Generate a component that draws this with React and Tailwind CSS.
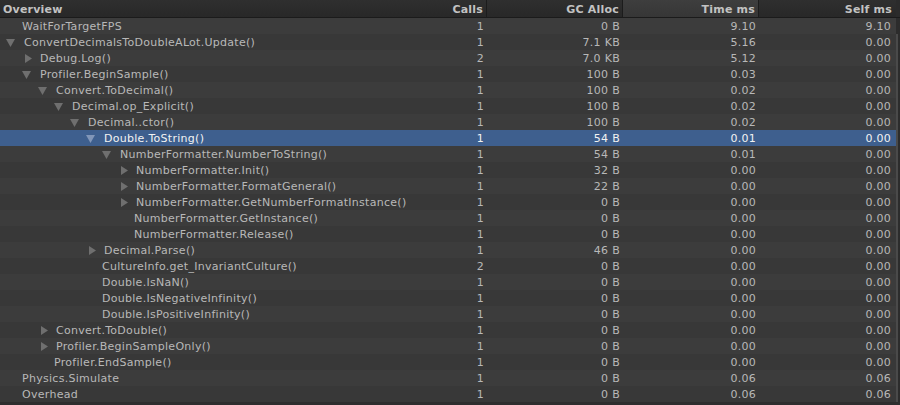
import React from "react";

const rows = [
  { name: "WaitForTargetFPS", lvl: 0, arrow: null, calls: "1", gc: "0 B", time: "9.10", self: "9.10" },
  { name: "ConvertDecimalsToDoubleALot.Update()", lvl: 0, arrow: "down", calls: "1", gc: "7.1 KB", time: "5.16", self: "0.00" },
  { name: "Debug.Log()", lvl: 1, arrow: "right", calls: "2", gc: "7.0 KB", time: "5.12", self: "0.00" },
  { name: "Profiler.BeginSample()", lvl: 1, arrow: "down", calls: "1", gc: "100 B", time: "0.03", self: "0.00" },
  { name: "Convert.ToDecimal()", lvl: 2, arrow: "down", calls: "1", gc: "100 B", time: "0.02", self: "0.00" },
  { name: "Decimal.op_Explicit()", lvl: 3, arrow: "down", calls: "1", gc: "100 B", time: "0.02", self: "0.00" },
  { name: "Decimal..ctor()", lvl: 4, arrow: "down", calls: "1", gc: "100 B", time: "0.02", self: "0.00" },
  { name: "Double.ToString()", lvl: 5, arrow: "down", calls: "1", gc: "54 B", time: "0.01", self: "0.00", sel: true },
  { name: "NumberFormatter.NumberToString()", lvl: 6, arrow: "down", calls: "1", gc: "54 B", time: "0.01", self: "0.00" },
  { name: "NumberFormatter.Init()", lvl: 7, arrow: "right", calls: "1", gc: "32 B", time: "0.00", self: "0.00" },
  { name: "NumberFormatter.FormatGeneral()", lvl: 7, arrow: "right", calls: "1", gc: "22 B", time: "0.00", self: "0.00" },
  { name: "NumberFormatter.GetNumberFormatInstance()", lvl: 7, arrow: "right", calls: "1", gc: "0 B", time: "0.00", self: "0.00" },
  { name: "NumberFormatter.GetInstance()", lvl: 7, arrow: null, calls: "1", gc: "0 B", time: "0.00", self: "0.00" },
  { name: "NumberFormatter.Release()", lvl: 7, arrow: null, calls: "1", gc: "0 B", time: "0.00", self: "0.00" },
  { name: "Decimal.Parse()", lvl: 5, arrow: "right", calls: "1", gc: "46 B", time: "0.00", self: "0.00" },
  { name: "CultureInfo.get_InvariantCulture()", lvl: 5, arrow: null, calls: "2", gc: "0 B", time: "0.00", self: "0.00" },
  { name: "Double.IsNaN()", lvl: 5, arrow: null, calls: "1", gc: "0 B", time: "0.00", self: "0.00" },
  { name: "Double.IsNegativeInfinity()", lvl: 5, arrow: null, calls: "1", gc: "0 B", time: "0.00", self: "0.00" },
  { name: "Double.IsPositiveInfinity()", lvl: 5, arrow: null, calls: "1", gc: "0 B", time: "0.00", self: "0.00" },
  { name: "Convert.ToDouble()", lvl: 2, arrow: "right", calls: "1", gc: "0 B", time: "0.00", self: "0.00" },
  { name: "Profiler.BeginSampleOnly()", lvl: 2, arrow: "right", calls: "1", gc: "0 B", time: "0.00", self: "0.00" },
  { name: "Profiler.EndSample()", lvl: 2, arrow: null, calls: "1", gc: "0 B", time: "0.00", self: "0.00" },
  { name: "Physics.Simulate", lvl: 0, arrow: null, calls: "1", gc: "0 B", time: "0.06", self: "0.06" },
  { name: "Overhead", lvl: 0, arrow: null, calls: "1", gc: "0 B", time: "0.06", self: "0.06" },
];

function Arrow({ dir, sel }) {
  const fill = sel ? "#8196b8" : "#6f6f6f";
  if (dir === "down") {
    return (
      <svg width="9" height="8" viewBox="0 0 9 8" className="absolute" style={{ left: -18, top: 3 }}>
        <polygon points="0,0 9,0 4.5,8" fill={fill} />
      </svg>
    );
  }
  return (
    <svg width="7" height="9" viewBox="0 0 7 9" className="absolute" style={{ left: -15, top: 2 }}>
      <polygon points="0,0 7,4.5 0,9" fill={fill} />
    </svg>
  );
}

export default function App() {
  return (
    <div
      className="w-[900px] h-[405px] overflow-hidden bg-[#2e2e2e] text-[11px] leading-[14px] tracking-[0.28px]"
      style={{ fontFamily: '"DejaVu Sans", Verdana, sans-serif' }}
    >
      <div className="grid grid-cols-[420px_67px_136px_136px_137px_4px] h-[18px] bg-gradient-to-b from-[#2f2f2f] to-[#282828] border-b border-[#1b1b1b] font-bold text-[#c2c2c2] leading-[15px] tracking-[0.2px]">
        <div className="pl-[3px] pt-[2px]">Overview</div>
        <div className="text-right pr-[3px] pt-[2px] border-r border-[#1c1c1c]">Calls</div>
        <div className="text-right pr-[3px] pt-[2px] border-r border-[#1c1c1c]">GC Alloc</div>
        <div className="text-right pr-[3px] pt-[2px] border-r border-[#1c1c1c] bg-gradient-to-b from-[#3e3e3e] to-[#363636]">Time ms</div>
        <div className="text-right pr-[4px] pt-[2px]">Self ms</div>
        <div className="bg-[#2b2b2b]"></div>
      </div>
      {rows.map((r, i) => {
        const bg = r.sel ? "bg-[#3e5f8e]" : i % 2 === 0 ? "bg-[#3c3c3c]" : "bg-[#383838]";
        const color = r.sel ? "text-[#f2f2f2]" : "text-[#b8b8b8]";
        const indent = 24 + r.lvl * 16 - (r.arrow ? 0 : 2);
        return (
          <div key={i} className="grid grid-cols-[420px_67px_136px_136px_137px_4px] h-[16px]">
            <div className={`${bg} ${color} whitespace-nowrap overflow-visible relative pt-[2px]`}>
              <span className="relative inline-block" style={{ marginLeft: indent }}>
                {r.arrow && <Arrow dir={r.arrow} sel={r.sel} />}
                {r.name}
              </span>
            </div>
            <div className={`${bg} ${color} text-right pr-[3px] pt-[2px]`}>{r.calls}</div>
            <div className={`${bg} ${color} text-right pr-[3px] pt-[2px]`}>{r.gc}</div>
            <div className={`${bg} ${color} text-right pr-[3px] pt-[2px]`}>{r.time}</div>
            <div className={`${bg} ${color} text-right pr-[5px] pt-[2px]`}>{r.self}</div>
            <div className="bg-[#2c2c2c] flex justify-start">
              {i >= 1 && <div className="w-[2px] h-full bg-[#4a4a4a]" />}
            </div>
          </div>
        );
      })}
    </div>
  );
}
